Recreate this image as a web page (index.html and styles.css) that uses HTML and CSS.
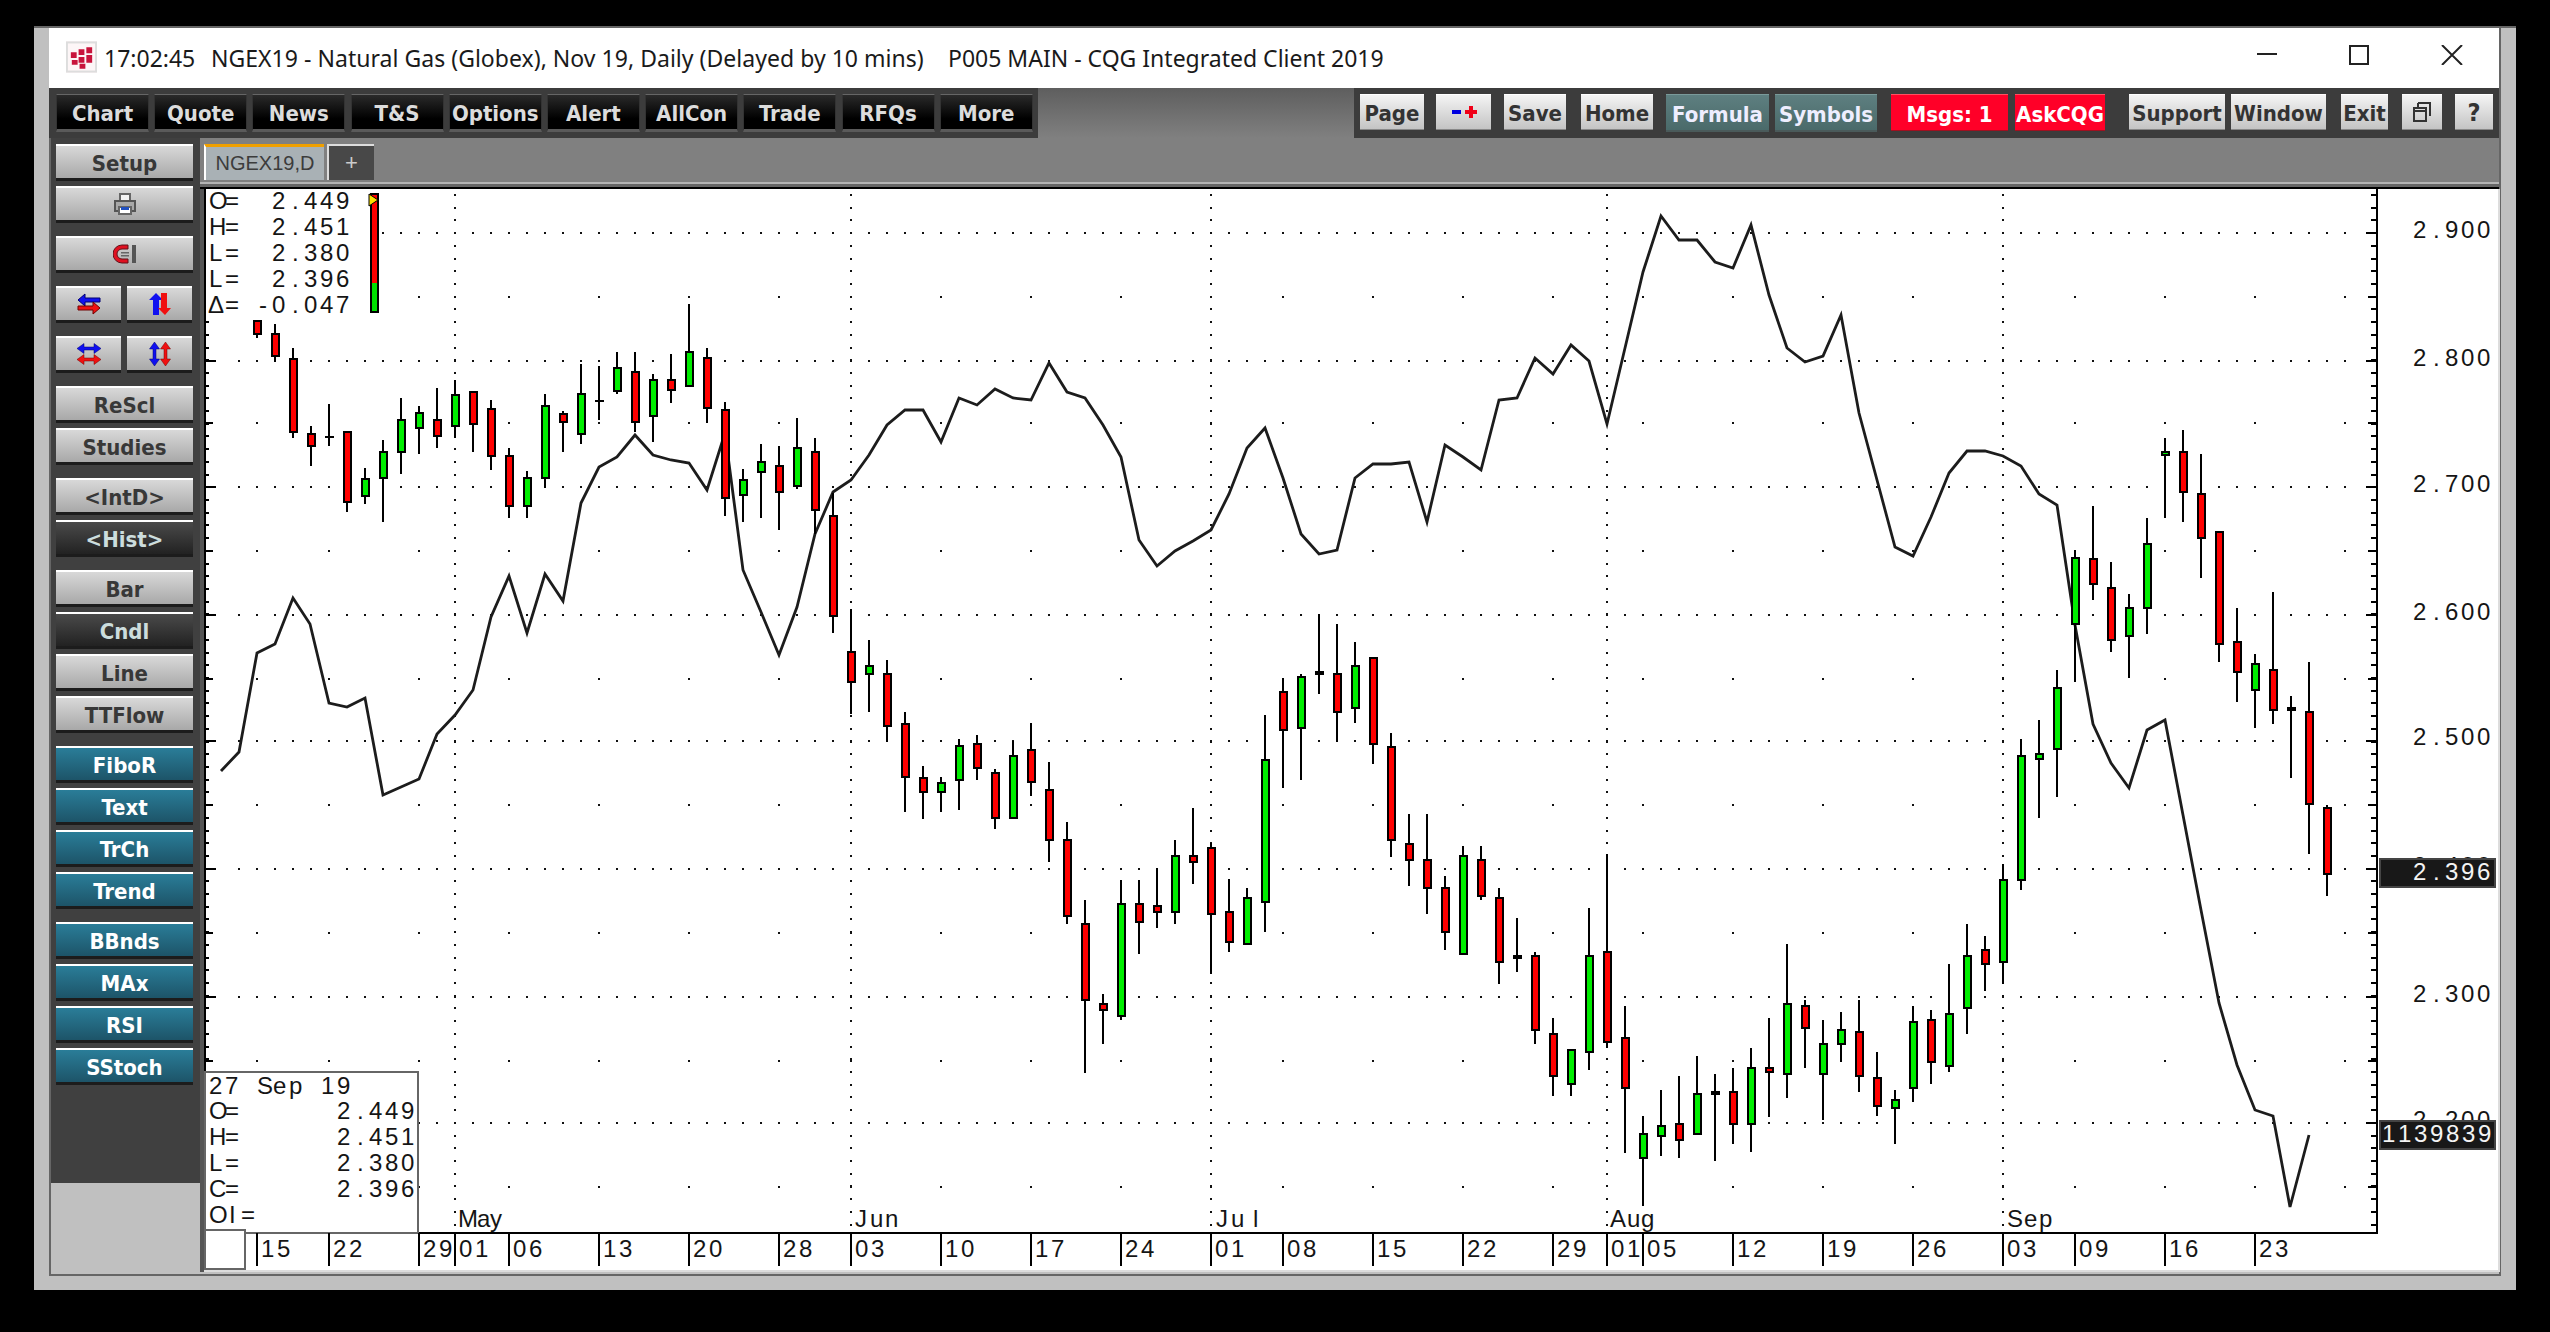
FILE: index.html
```html
<!DOCTYPE html>
<html lang="en">
<head>
<meta charset="utf-8">
<title>CQG Integrated Client</title>
<link rel="stylesheet" href="styles.css">
</head>
<body>
<div class="window">
<div class="frame">
  <header class="titlebar">
    <svg class="app-icon" viewBox="0 0 32 32"><rect width="32" height="32" fill="#f4e4e8"/><rect x="1" y="1" width="30" height="30" fill="#fdf6f7" stroke="#ddd" stroke-width="2"/><path d="M5 11h6v6H5zM13 8h6v6h-6zM21 6h6v6h-6zM6 19h6v5H6zM13 16h6v6h-6zM21 14h6v8h-6zM14 23h6v5h-6z" fill="#c8143c"/></svg>
    <span class="title-text title-time">17:02:45</span>
    <span class="title-text title-sym">NGEX19 - Natural Gas (Globex), Nov 19, Daily (Delayed by 10 mins)</span>
    <span class="title-text title-page">P005 MAIN - CQG Integrated Client 2019</span>
    <div class="win-controls">
      <svg class="win-icon" viewBox="0 0 20 20"><path d="M0 9h20" stroke="#222" stroke-width="2"/></svg>
      <svg class="win-icon win-max" viewBox="0 0 20 20"><rect x="1" y="1" width="18" height="18" fill="none" stroke="#222" stroke-width="2"/></svg>
      <svg class="win-icon win-close" viewBox="0 0 24 20"><path d="M2 0l20 20M22 0L2 20" stroke="#222" stroke-width="2"/></svg>
    </div>
  </header>
  <nav class="toolbar">
    <div class="tb-left">
      <button class="tb-black">Chart</button><button class="tb-black">Quote</button><button class="tb-black">News</button><button class="tb-black">T&amp;S</button><button class="tb-black">Options</button><button class="tb-black">Alert</button><button class="tb-black">AllCon</button><button class="tb-black">Trade</button><button class="tb-black">RFQs</button><button class="tb-black">More</button>
    </div>
    <div class="tb-mid"></div>
    <div class="tb-right">
      <button class="tb-btn b-page">Page</button>
      <button class="tb-btn b-pm"><svg class="pm-icon" viewBox="0 0 26 14"><path d="M1 5h9v4H1z" fill="#0000e0"/><path d="M14 5h12v4H14zM18 1h4v12h-4z" fill="#f00018"/></svg></button>
      <button class="tb-btn b-save">Save</button>
      <button class="tb-btn b-home">Home</button>
      <button class="tb-btn tb-slate b-formula">Formula</button>
      <button class="tb-btn tb-slate b-symbols">Symbols</button>
      <button class="tb-btn tb-red b-msgs">Msgs: 1</button>
      <button class="tb-btn tb-red b-ask">AskCQG</button>
      <button class="tb-btn b-support">Support</button>
      <button class="tb-btn b-window">Window</button>
      <button class="tb-btn b-exit">Exit</button>
      <button class="tb-btn b-restore"><svg class="restore-icon" viewBox="0 0 18 20"><path d="M5 1h12v13M5 1v4M1 6h12v13H1zM1 6v3h12" fill="none" stroke="#333" stroke-width="2"/></svg></button>
      <button class="tb-btn b-help">?</button>
    </div>
  </nav>
  <div class="main">
    <aside class="sidebar">
      <div class="panel">
        <div class="sb-group">
          <button class="sb-btn">Setup</button>
          <button class="sb-btn sb-iconbtn"><svg class="sb-icon" viewBox="0 0 24 24"><path d="M7 2h10v7H7z" fill="#f4f4f4" stroke="#666" stroke-width="2"/><path d="M2 9h20v10H2z" fill="#a8a8a8" stroke="#555" stroke-width="2"/><path d="M6 15h12v7H6z" fill="#fff" stroke="#666" stroke-width="2"/><path d="M8 15h8v3H8z" fill="#2050c0"/></svg></button>
        </div>
        <div class="sb-group">
          <button class="sb-btn sb-iconbtn"><svg class="sb-icon" viewBox="0 0 24 20"><path d="M15 1H9a9 9 0 0 0 0 18h6v-4H9a5 5 0 0 1 0-10h6z" fill="#e01020" stroke="#601018"/><path d="M8 8h8v1.500H8zM8 11h8v1.500H8z" fill="#666"/><path d="M19 1h4v18h-4z" fill="#555"/></svg></button>
        </div>
        <div class="sb-group sb-row">
          <button class="sb-btn sb-iconbtn"><svg class="sb-icon" viewBox="0 0 24 22"><path d="M8 1v4h15v4H8v4L1 7z" fill="#1010f0" stroke="#000070"/><path d="M16 9v4H1v4h15v4l7-6z" fill="#f01010" stroke="#700000"/></svg></button>
          <button class="sb-btn sb-iconbtn"><svg class="sb-icon" viewBox="0 0 22 24"><path d="M7 1L0 8h4v15h6V8h4z" fill="#1010f0"/><path d="M16 23l6-7h-4V1h-6v15H9z" fill="#f01010"/></svg></button>
        </div>
        <div class="sb-group sb-row">
          <button class="sb-btn sb-iconbtn"><svg class="sb-icon" viewBox="0 0 24 23"><path d="M0 6l7-5v3.500h10V1l7 5-7 5V7.500H7V11z" fill="#1010f0" stroke="#000070" stroke-width=".5"/><path d="M0 17l7-5v3.500h10V12l7 5-7 5v-3.500H7V22z" fill="#f01010" stroke="#700000" stroke-width=".5"/></svg></button>
          <button class="sb-btn sb-iconbtn"><svg class="sb-icon" viewBox="0 0 23 24"><path d="M6 0l5 7H7.500v10H11l-5 7-5-7h3.500V7H1z" fill="#1010f0" stroke="#000070" stroke-width=".5"/><path d="M17 0l5 7h-3.500v10H22l-5 7-5-7h3.500V7H12z" fill="#f01010" stroke="#700000" stroke-width=".5"/></svg></button>
        </div>
        <div class="sb-group">
          <button class="sb-btn">ReScl</button>
          <button class="sb-btn">Studies</button>
        </div>
        <div class="sb-group">
          <button class="sb-btn">&lt;IntD&gt;</button>
          <button class="sb-btn sb-dark">&lt;Hist&gt;</button>
        </div>
        <div class="sb-group">
          <button class="sb-btn">Bar</button>
          <button class="sb-btn sb-dark">Cndl</button>
          <button class="sb-btn">Line</button>
          <button class="sb-btn">TTFlow</button>
        </div>
        <div class="sb-group">
          <button class="sb-btn sb-teal">FiboR</button>
          <button class="sb-btn sb-teal">Text</button>
          <button class="sb-btn sb-teal">TrCh</button>
          <button class="sb-btn sb-teal">Trend</button>
        </div>
        <div class="sb-group">
          <button class="sb-btn sb-teal">BBnds</button>
          <button class="sb-btn sb-teal">MAx</button>
          <button class="sb-btn sb-teal">RSI</button>
          <button class="sb-btn sb-teal">SStoch</button>
        </div>
      </div>
      <div class="side-foot"></div>
    </aside>
    <section class="content">
      <div class="tabs">
        <div class="tab tab-active">NGEX19,D</div>
        <div class="tab tab-add">+</div>
      </div>
      <div class="tab-sep"></div>
      <svg class="chart" viewBox="200 189 2300 1083" xmlns="http://www.w3.org/2000/svg">
        <rect x="200" y="189" width="2300" height="1083" fill="#fff"/>
        <rect x="200" y="189" width="4" height="1083" fill="#555"/>
        <rect x="2498" y="189" width="2" height="1083" fill="#ddd"/>
        <rect x="204" y="1270" width="2296" height="2" fill="#ddd"/>
        <g class="dots-dense">
          <line x1="238" x2="2346" y1="233" y2="233"/><line x1="238" x2="2346" y1="361" y2="361"/><line x1="238" x2="2346" y1="487" y2="487"/><line x1="238" x2="2346" y1="615" y2="615"/><line x1="238" x2="2346" y1="741" y2="741"/><line x1="238" x2="2346" y1="869" y2="869"/><line x1="238" x2="2346" y1="997" y2="997"/><line x1="238" x2="2346" y1="1123" y2="1123"/>
        </g>
        <g class="dots-sparse">
          <line x1="256" x2="2347" y1="297" y2="297"/><line x1="256" x2="2347" y1="423" y2="423"/><line x1="256" x2="2347" y1="551" y2="551"/><line x1="256" x2="2347" y1="679" y2="679"/><line x1="256" x2="2347" y1="805" y2="805"/><line x1="256" x2="2347" y1="933" y2="933"/><line x1="256" x2="2347" y1="1061" y2="1061"/><line x1="256" x2="2347" y1="1187" y2="1187"/>
        </g>
        <g class="dots-month">
          <line x1="455" x2="455" y1="194" y2="1228"/><line x1="851" x2="851" y1="194" y2="1228"/><line x1="1211" x2="1211" y1="194" y2="1228"/><line x1="1607" x2="1607" y1="194" y2="1228"/><line x1="2003" x2="2003" y1="194" y2="1228"/>
        </g>
        <polyline class="close-line" points="221,771 239,752 257,653 275,644 293,598 310,624 329,703 347,707 365,698 383,795 401,787 419,779 437,734 455,715 473,690 491,617 509,576 527,633 545,574 563,601 581,503 599,467 617,457 635,435 653,455 671,460 689,463 707,490 725,433 743,570 761,612 779,655 797,607 815,534 833,492 851,480 869,455 887,425 905,410 923,410 941,442 959,398 977,405 995,389 1013,398 1031,400 1049,363 1067,392 1085,398 1103,425 1121,457 1139,540 1157,566 1175,551 1193,541 1211,530 1229,494 1247,448 1265,428 1283,478 1301,534 1319,554 1337,550 1355,478 1373,464 1391,464 1409,462 1427,522 1445,445 1463,457 1481,470 1499,400 1517,398 1535,358 1553,374 1571,345 1589,361 1607,424 1625,348 1643,272 1661,216 1679,240 1697,240 1715,262 1733,268 1751,225 1769,295 1787,348 1805,362 1823,356 1841,315 1859,413 1877,480 1895,547 1913,556 1931,517 1949,473 1967,451 1985,451 2003,456 2021,466 2039,494 2057,505 2075,625 2093,724 2111,763 2129,788 2147,730 2165,720 2183,815 2201,910 2219,1003 2237,1065 2255,1110 2273,1116 2290,1207 2309,1135"/>
        <path class="wick" d="M257 320V338M275 324V362M293 348V438M311 426V466M329 404V446M324.500 437h9M347 431V512M365 468V504M383 440V522M401 398V474M419 406V454M437 388V448M455 380V438M473 391V452M491 400V470M509 448V518M527 471V518M545 394V488M563 411V452M581 364V444M599 366V420M594.500 401h9M617 352V394M635 352V432M653 374V442M671 354V403M689 304V387M707 348V423M725 402V516M743 469V522M761 444V518M779 446V530M797 418V489M815 438V534M833 493V633M851 609V714M869 640V712M887 660V742M905 712V812M923 766V819M941 777V812M959 739V810M977 735V780M995 769V829M1013 741V819M1031 723V796M1049 762V862M1067 822V924M1085 900V1073M1103 994V1044M1121 880V1020M1139 880V954M1157 868V928M1175 840V924M1193 808V884M1211 843V974M1229 879V952M1247 888V945M1265 715V932M1283 678V788M1301 674V780M1319 614V694M1337 624V742M1355 642V723M1373 657V764M1391 733V857M1409 814V886M1427 814V914M1445 876V950M1463 846V955M1481 846V900M1499 888V984M1517 918V972M1535 952V1044M1553 1018V1096M1571 1049V1096M1589 908V1070M1607 854V1048M1625 1006V1153M1643 1116V1206M1661 1090V1156M1679 1076V1158M1697 1056V1135M1715 1074V1161M1733 1068V1144M1751 1048V1152M1769 1018V1117M1787 944V1098M1805 1000V1068M1823 1020V1120M1841 1012V1062M1859 1000V1092M1877 1052V1116M1895 1090V1144M1913 1006V1102M1931 1010V1084M1949 964V1072M1967 924V1034M1985 936V991M2003 864V984M2021 739V890M2039 720V818M2057 670V797M2075 550V682M2093 506V600M2111 562V652M2129 594V678M2147 518V634M2165 438V518M2183 430V522M2201 454V578M2219 531V662M2237 608V702M2255 654V728M2273 592V724M2291 696V778M2309 662V854M2327 805V896"/>
        <path class="body-red" d="M253.500 321h7V334h-7zM271.500 334h7V356h-7zM289.500 359h7V432h-7zM307.500 434h7V446h-7zM343.500 432h7V502h-7zM433.500 420h7V436h-7zM469.500 392h7V424h-7zM487.500 409h7V456h-7zM505.500 456h7V506h-7zM559.500 414h7V422h-7zM631.500 372h7V422h-7zM667.500 380h7V390h-7zM703.500 358h7V408h-7zM721.500 410h7V498h-7zM775.500 466h7V492h-7zM811.500 452h7V510h-7zM829.500 516h7V616h-7zM847.500 652h7V682h-7zM883.500 674h7V726h-7zM901.500 724h7V777h-7zM919.500 778h7V792h-7zM973.500 744h7V768h-7zM991.500 773h7V818h-7zM1027.500 750h7V782h-7zM1045.500 790h7V840h-7zM1063.500 840h7V916h-7zM1081.500 924h7V1000h-7zM1099.500 1004h7V1010h-7zM1135.500 904h7V922h-7zM1153.500 906h7V912h-7zM1189.500 856h7V862h-7zM1207.500 848h7V914h-7zM1225.500 912h7V942h-7zM1279.500 692h7V730h-7zM1333.500 674h7V712h-7zM1369.500 658h7V744h-7zM1387.500 747h7V840h-7zM1405.500 844h7V860h-7zM1423.500 860h7V888h-7zM1441.500 888h7V932h-7zM1477.500 860h7V896h-7zM1495.500 898h7V962h-7zM1531.500 956h7V1030h-7zM1549.500 1034h7V1076h-7zM1603.500 952h7V1042h-7zM1621.500 1038h7V1088h-7zM1675.500 1124h7V1140h-7zM1711.500 1092h7V1094h-7zM1729.500 1092h7V1124h-7zM1765.500 1068h7V1072h-7zM1801.500 1006h7V1028h-7zM1855.500 1032h7V1076h-7zM1873.500 1078h7V1106h-7zM1927.500 1020h7V1062h-7zM1981.500 950h7V964h-7zM2089.500 559h7V584h-7zM2107.500 588h7V640h-7zM2179.500 452h7V492h-7zM2197.500 494h7V538h-7zM2215.500 532h7V644h-7zM2233.500 642h7V672h-7zM2269.500 670h7V710h-7zM2305.500 712h7V804h-7zM2323.500 808h7V874h-7z"/>
        <path class="body-green" d="M361.500 479h7V496h-7zM379.500 452h7V478h-7zM397.500 420h7V452h-7zM415.500 413h7V428h-7zM451.500 395h7V426h-7zM523.500 478h7V506h-7zM541.500 406h7V478h-7zM577.500 394h7V434h-7zM613.500 368h7V391h-7zM649.500 380h7V416h-7zM685.500 352h7V386h-7zM739.500 480h7V495h-7zM757.500 462h7V472h-7zM793.500 448h7V486h-7zM865.500 666h7V674h-7zM937.500 783h7V792h-7zM955.500 746h7V780h-7zM1009.500 756h7V818h-7zM1117.500 904h7V1016h-7zM1171.500 856h7V912h-7zM1243.500 898h7V944h-7zM1261.500 760h7V902h-7zM1297.500 677h7V728h-7zM1315.500 672h7V674h-7zM1351.500 666h7V708h-7zM1459.500 856h7V954h-7zM1513.500 956h7V958h-7zM1567.500 1050h7V1084h-7zM1585.500 956h7V1052h-7zM1639.500 1134h7V1158h-7zM1657.500 1126h7V1136h-7zM1693.500 1094h7V1134h-7zM1747.500 1068h7V1124h-7zM1783.500 1004h7V1074h-7zM1819.500 1044h7V1074h-7zM1837.500 1030h7V1044h-7zM1891.500 1100h7V1108h-7zM1909.500 1022h7V1088h-7zM1945.500 1014h7V1066h-7zM1963.500 956h7V1008h-7zM1999.500 880h7V962h-7zM2017.500 756h7V880h-7zM2035.500 754h7V759h-7zM2053.500 688h7V749h-7zM2071.500 558h7V624h-7zM2125.500 608h7V636h-7zM2143.500 544h7V608h-7zM2161.500 452h7V455h-7zM2251.500 664h7V690h-7zM2287.500 708h7V710h-7z"/>
        <!-- axes -->
        <rect class="axis" x="204" y="189" width="2" height="882"/>
        <rect class="axis" x="2376" y="189" width="2" height="1045"/>
        <rect class="axis" x="419" y="1232" width="1959" height="2"/>
        <line class="tick-minor tick-left" x1="207.500" x2="207.500" y1="194" y2="1070"/>
        <line class="tick-minor tick-right" x1="2373.500" x2="2373.500" y1="194" y2="1232"/>
        <path class="tick-major" d="M206 233h10M206 361h10M206 487h10M206 615h10M206 741h10M206 869h10M206 997h10M206 1123h10M206 297h7M206 423h7M206 551h7M206 679h7M206 805h7M206 933h7M206 1061h7M2366 233h10M2366 361h10M2366 487h10M2366 615h10M2366 741h10M2366 869h10M2366 997h10M2366 1123h10M2368 297h8M2368 423h8M2368 551h8M2368 679h8M2368 805h8M2368 933h8M2368 1061h8M2368 1187h8"/>
        <!-- top-left quote block -->
        <rect x="206" y="190" width="172" height="127" fill="#fff"/>
        <g class="mono">
          <text x="209 225" y="209">O=</text><text x="272 292 304 320 336" y="209">2.449</text>
          <text x="209 225" y="235">H=</text><text x="272 292 304 320 336" y="235">2.451</text>
          <text x="209 225" y="261">L=</text><text x="272 292 304 320 336" y="261">2.380</text>
          <text x="209 225" y="287">L=</text><text x="272 292 304 320 336" y="287">2.396</text>
          <text x="208 225" y="313">Δ=</text><text x="259 272 292 304 320 336" y="313">-0.047</text>
        </g>
        <rect x="371" y="195" width="7" height="88" fill="#f00"/>
        <rect x="371" y="283" width="7" height="29" fill="#00e000"/>
        <rect x="371" y="194" width="7" height="118" fill="none" stroke="#000" stroke-width="2"/>
        <path d="M369 194l9 6-9 6z" fill="#ffe000" stroke="#000"/>
        <!-- right scale -->
        <g class="mono">
          <text x="2413 2433 2445 2461 2477" y="238">2.900</text>
          <text x="2413 2433 2445 2461 2477" y="366">2.800</text>
          <text x="2413 2433 2445 2461 2477" y="492">2.700</text>
          <text x="2413 2433 2445 2461 2477" y="620">2.600</text>
          <text x="2413 2433 2445 2461 2477" y="745">2.500</text>
          <text x="2413 2433 2445 2461 2477" y="874">2.400</text>
          <text x="2413 2433 2445 2461 2477" y="1002">2.300</text>
          <text x="2413 2433 2445 2461 2477" y="1128">2.200</text>
        </g>
        <rect class="price-box" x="2380" y="859" width="115" height="28"/>
        <text class="mono box-text" x="2413 2433 2445 2461 2477" y="880">2.396</text>
        <rect class="price-box" x="2380" y="1121" width="115" height="28"/>
        <text class="mono box-text" x="2382 2398 2414 2430 2446 2462 2478" y="1142">1139839</text>
        <!-- bottom-left data box -->
        <rect class="data-box" x="205" y="1072" width="213" height="161"/>
        <g class="mono">
          <text x="209 225 241 257 273 289 305 321 337" y="1094">27 Sep 19</text>
          <text x="209 225" y="1119">O=</text><text x="337 357 369 385 401" y="1119">2.449</text>
          <text x="209 225" y="1145">H=</text><text x="337 357 369 385 401" y="1145">2.451</text>
          <text x="209 225" y="1171">L=</text><text x="337 357 369 385 401" y="1171">2.380</text>
          <text x="209 225" y="1197">C=</text><text x="337 357 369 385 401" y="1197">2.396</text>
          <text x="209 229 241" y="1223">OI=</text>
        </g>
        <rect class="corner-box" x="205" y="1230" width="40" height="39"/>
        <!-- month labels -->
        <g class="mono">
          <text x="458 477 490" y="1227">May</text>
          <text x="855 870 885" y="1227">Jun</text>
          <text x="1216 1231 1253" y="1227">Jul</text>
          <text x="1610 1627 1641" y="1227">Aug</text>
          <text x="2007 2024 2039" y="1227">Sep</text>
        </g>
        <!-- date axis -->
        <path class="date-ticks" d="M257 1233v33M329 1233v33M419 1233v33M455 1233v33M509 1233v33M599 1233v33M689 1233v33M779 1233v33M851 1233v33M941 1233v33M1031 1233v33M1121 1233v33M1211 1233v33M1283 1233v33M1373 1233v33M1463 1233v33M1553 1233v33M1607 1233v33M1643 1233v33M1733 1233v33M1823 1233v33M1913 1233v33M2003 1233v33M2075 1233v33M2165 1233v33M2255 1233v33"/>
        <g class="mono">
          <text x="261 277" y="1257">15</text><text x="333 349" y="1257">22</text><text x="423 439" y="1257">29</text><text x="459 475" y="1257">01</text><text x="513 529" y="1257">06</text><text x="603 619" y="1257">13</text><text x="693 709" y="1257">20</text><text x="783 799" y="1257">28</text><text x="855 871" y="1257">03</text><text x="945 961" y="1257">10</text><text x="1035 1051" y="1257">17</text><text x="1125 1141" y="1257">24</text><text x="1215 1231" y="1257">01</text><text x="1287 1303" y="1257">08</text><text x="1377 1393" y="1257">15</text><text x="1467 1483" y="1257">22</text><text x="1557 1573" y="1257">29</text><text x="1611 1627" y="1257">01</text><text x="1647 1663" y="1257">05</text><text x="1737 1753" y="1257">12</text><text x="1827 1843" y="1257">19</text><text x="1917 1933" y="1257">26</text><text x="2007 2023" y="1257">03</text><text x="2079 2095" y="1257">09</text><text x="2169 2185" y="1257">16</text><text x="2259 2275" y="1257">23</text>
        </g>
      </svg>
    </section>
  </div>
</div>
</div>
</body>
</html>
```
FILE: styles.css
```css
* { box-sizing: border-box; }
html, body { margin: 0; padding: 0; background: #000; }
body { width: 2550px; height: 1332px; overflow: hidden; padding: 26px 0 0 34px; }

.window { width: 2482px; height: 1264px; background: #c0c0c0; border-top: 2px solid #666; padding: 0 15px 14px 15px; }
.frame { height: 100%; display: flex; flex-direction: column; border-right: 2px solid #666; border-bottom: 2px solid #666; }

.titlebar { height: 60px; flex: none; background: #fff; display: flex; align-items: center; padding-left: 17px; position: relative; }
.app-icon { width: 31px; height: 32px; flex: none; margin-right: 7px; margin-top: -2px; }
.title-text { font-family: "Noto Sans", "Liberation Sans", sans-serif; font-size: 23px; color: #1a1a1a; white-space: nowrap; margin-top: -1px; }
.title-time { width: 107px; }
.title-sym { width: 737px; letter-spacing: 0.03px; }
.win-controls { margin-left: auto; display: flex; align-items: center; }
.win-icon { width: 20px; height: 20px; display: block; margin-bottom: 6px; }
.win-max { margin-left: 72px; }
.win-close { width: 24px; margin-left: 71px; margin-right: 35px; }

.toolbar { height: 50px; flex: none; display: flex; }
.tb-left { width: 989px; background: #3c3c3c; display: flex; gap: 5.2px; padding: 6px 0 0 7px; }
.tb-mid { width: 316px; background: linear-gradient(#5e5e5e, #808080); }
.tb-right { flex: 1; background: #3c3c3c; display: flex; padding: 6px 0 0 6px; }

button { font-family: "DejaVu Sans Condensed", "DejaVu Sans", sans-serif; font-weight: 700; font-stretch: condensed; font-size: 22px; padding: 3px 0 0; margin: 0; cursor: default; display: flex; align-items: center; justify-content: center; white-space: nowrap; }

.tb-black { width: 93px; height: 38px; color: #dcdcdc; background: linear-gradient(#2a2a2a, #000 70%); border: 0; border-top: 1px solid #666; border-bottom: 3px solid #5a5a5a; border-left: 1px solid #333; border-right: 1px solid #333; }
.tb-btn { height: 36px; color: #333; background: linear-gradient(#f4f4f4, #c4c4c4); border: 0; border-top: 1px solid #fff; border-bottom: 1px solid #888; }
.tb-slate { height: 38px; color: #eef; background: linear-gradient(#5e7f80, #4a6a6a); border-top: 1px solid #7a9a9a; border-bottom: 2px solid #4a5a5a; }
.tb-red { height: 37px; color: #fff; background: #ff0028; border-top: 1px solid #ff5060; border-bottom: 1px solid #a01020; }

.b-page { width: 64px; }
.b-pm { width: 55px; margin-left: 12px; padding-top: 0; }
.b-save { width: 62px; margin-left: 13px; }
.b-home { width: 72px; margin-left: 15px; }
.b-formula { width: 103px; margin-left: 13px; }
.b-symbols { width: 102px; margin-left: 6px; }
.b-msgs { width: 117px; margin-left: 14px; }
.b-ask { width: 90px; margin-left: 7px; }
.b-support { width: 96px; margin-left: 24px; }
.b-window { width: 95px; margin-left: 6px; }
.b-exit { width: 47px; margin-left: 15px; }
.b-restore { width: 40px; margin-left: 14px; padding-top: 0; }
.b-help { width: 38px; margin-left: 13px; font-size: 25px; padding-top: 0; }
.pm-icon { width: 26px; height: 14px; display: block; }
.restore-icon { width: 18px; height: 20px; display: block; }

.main { flex: 1; display: flex; min-height: 0; }
.sidebar { width: 151px; flex: none; display: flex; flex-direction: column; border-left: 2px solid #666; }
.panel { height: 1045px; background: #404040; display: flex; flex-direction: column; gap: 13px; padding: 6px 7px 0 5px; }
.side-foot { flex: 1; background: #c0c0c0; }
.sb-group { display: flex; flex-direction: column; gap: 5px; }
.sb-row { flex-direction: row; gap: 6px; }
.sb-row .sb-btn { width: 65px; }
.sb-btn { width: 137px; height: 37px; color: #383838; background: linear-gradient(#d8d8d8, #a8a8a8); border: 0; border-top: 2px solid #fff; border-bottom: 3px solid #1c1c1c; }
.sb-iconbtn { padding-top: 0; }
.sb-dark { color: #cdd; background: linear-gradient(#4a4a4a, #222); }
.sb-teal { color: #fff; background: linear-gradient(#2a7d98, #1d5468); }
.sb-icon { width: 24px; height: 24px; display: block; }

.content { flex: 1; display: flex; flex-direction: column; min-width: 0; }
.tabs { height: 42px; flex: none; background: #808080; display: flex; padding: 6px 0 0 4px; gap: 3px; }
.tab { height: 36px; display: flex; align-items: center; justify-content: center; font-family: "Liberation Sans", sans-serif; font-size: 20px; }
.tab-active { width: 120px; background: #a9b1b5; color: #3c3c3c; border-top: 3px solid #f0a000; border-left: 2px solid #fff; }
.tab-add { width: 47px; background: #484848; color: #ccc; border-top: 2px solid #ddd; border-left: 2px solid #ddd; font-size: 22px; }
.tab-sep { height: 9px; flex: none; background: linear-gradient(#808080 0 2px, #b4b4b4 2px 4px, #666 4px 7px, #000 7px 9px); }

.chart { display: block; width: 2300px; height: 1083px; flex: none; overflow: visible; }
.dots-dense line { stroke: #111; stroke-width: 2; stroke-dasharray: 2 16; shape-rendering: crispEdges; }
.dots-sparse line { stroke: #111; stroke-width: 2; shape-rendering: crispEdges; stroke-dasharray: 2 70 2 88 2 88 2 88 2 88 2 88 2 70 2 88 2 88 2 88 2 88 2 70 2 88 2 88 2 88 2 88 2 88 2 88 2 88 2 88 2 70 2 88 2 88 2 88; }
.dots-month line { stroke: #111; stroke-width: 2; stroke-dasharray: 2 10.71; shape-rendering: crispEdges; }
.close-line { fill: none; stroke: #1c1c1c; stroke-width: 2.8; stroke-linejoin: miter; }
.wick { fill: none; stroke: #000; stroke-width: 2; shape-rendering: crispEdges; }
.body-red { fill: #f00; stroke: #000; stroke-width: 2; shape-rendering: crispEdges; }
.body-green { fill: #00ee00; stroke: #000; stroke-width: 2; shape-rendering: crispEdges; }
.axis { fill: #000; }
.tick-minor { stroke: #000; stroke-dasharray: 2 10.71; shape-rendering: crispEdges; }
.tick-left { stroke-width: 3; }
.tick-right { stroke-width: 5; }
.tick-major { fill: none; stroke: #000; stroke-width: 2; shape-rendering: crispEdges; }
.mono text, .mono { font-family: "Liberation Sans", Arial, sans-serif; font-size: 24px; fill: #151515; }
.box-text { fill: #f4f4f4; }
.price-box { fill: #181818; stroke: #444; stroke-width: 2; }
.data-box { fill: #fff; stroke: #666; stroke-width: 2; }
.corner-box { fill: #fff; stroke: #666; stroke-width: 2; }
.date-ticks { fill: none; stroke: #000; stroke-width: 2; shape-rendering: crispEdges; }
```
